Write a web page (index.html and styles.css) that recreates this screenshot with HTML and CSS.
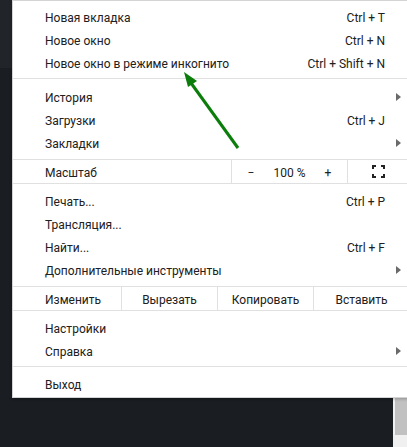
FILE: index.html
```html
<!DOCTYPE html>
<html lang="ru">
<head>
    <meta charset="UTF-8">
    <title>Меню</title>
    <link rel="stylesheet" href="styles.css">
</head>
<body>
    <div class="backdrop">
        <div class="topbar"></div>
        <div class="scrollbar"><div class="thumb"></div></div>
    </div>

    <div class="menu">
        <div class="group first">
            <div class="item"><span>Новая вкладка</span><span class="key">Ctrl + T</span></div>
            <div class="item"><span>Новое окно</span><span class="key">Ctrl + N</span></div>
            <div class="item"><span>Новое окно в режиме инкогнито</span><span class="key">Ctrl + Shift + N</span></div>
        </div>
        <div class="group second">
            <div class="item sub"><span>История</span></div>
            <div class="item"><span>Загрузки</span><span class="key">Ctrl + J</span></div>
            <div class="item sub"><span>Закладки</span></div>
        </div>
        <div class="zoom_row">
            <div class="zoom_label">Масштаб</div>
            <div class="zoom_controls">
                <span class="zbtn">&minus;</span>
                <span class="zval">100 %</span>
                <span class="zbtn">+</span>
            </div>
            <div class="fullscreen">
                <svg width="13" height="13" viewBox="0 0 13 13">
                    <!-- four corners of the fullscreen icon -->
                    <path d="M1 4V1H4M9 1H12V4M12 9V12H9M4 12H1V9" fill="none" stroke="#222" stroke-width="2"/>
                </svg>
            </div>
        </div>
        <div class="group">
            <div class="item"><span>Печать...</span><span class="key">Ctrl + P</span></div>
            <div class="item"><span>Трансляция...</span></div>
            <div class="item"><span>Найти...</span><span class="key">Ctrl + F</span></div>
            <div class="item sub"><span>Дополнительные инструменты</span></div>
        </div>
        <div class="edit_row">
            <div class="edit_label">Изменить</div>
            <div class="edit_btn">Вырезать</div>
            <div class="edit_btn">Копировать</div>
            <div class="edit_btn">Вставить</div>
        </div>
        <div class="group fourth">
            <div class="item"><span>Настройки</span></div>
            <div class="item sub"><span>Справка</span></div>
        </div>
        <div class="group last">
            <div class="item"><span>Выход</span></div>
        </div>

        <!-- green pointer drawn over the menu -->
        <svg class="pointer" width="70" height="90" viewBox="0 0 70 90">
            <line x1="63" y1="82" x2="16" y2="17" stroke="#0b7d0b" stroke-width="3"/>
            <polygon points="9,6 22,15 13,21" fill="#0b7d0b"/>
        </svg>
    </div>
</body>
</html>
```

FILE: styles.css
```css
html, body{
    margin: 0;
    height: 100%;
    overflow: hidden;
}

body{
    background: #1a1d21;
    font-family: Roboto, "Noto Sans", sans-serif;
    font-size: 12px;
    color: #202020;
}

.backdrop{
    position: relative;
    height: 100%;
}

.topbar{
    height: 68px;
    background: #212428;
}

.scrollbar{
    position: absolute;
    right: 0;
    top: 0;
    bottom: 0;
    width: 14px;
    background: #f0f0f0;
}

.thumb{
    margin-top: 360px;
    margin-left: 2px;
    height: 75px;
    background: #c1c1c1;
}

/* dropdown menu lies over the page */
.menu{
    position: absolute;
    left: 12px;
    top: 0;
    width: 398px;
    box-sizing: border-box;
    background: #fff;
    border: 1px solid #d4d4d4;
    box-shadow: 0 1px 3px rgba(0,0,0,0.25);
}

.group{
    padding: 5px 0;
    border-bottom: 1px solid #e0e0e0;
}

.group.first{
    padding: 4px 0;
}

.group.second{
    padding: 6px 0 5px;
}

.group.fourth{
    padding: 5px 0 4px;
}

.group.last{
    border-bottom: none;
    padding: 5px 0 2px;
}

/* text sits a bit lower than the middle of the row */
.item{
    display: flex;
    justify-content: space-between;
    height: 23px;
    line-height: 26px;
    padding: 0 24px 0 32px;
    position: relative;
}

.item.sub::after{
    content: "";
    position: absolute;
    right: 8px;
    top: 8px;
    border-left: 5px solid #6a6a6a;
    border-top: 4px solid transparent;
    border-bottom: 4px solid transparent;
}

.zoom_row, .edit_row{
    display: flex;
    height: 23px;
    line-height: 26px;
    border-bottom: 1px solid #e0e0e0;
}

.zoom_label{
    flex: 1;
    padding-left: 32px;
}

.zoom_controls{
    width: 115px;
    display: flex;
    border-left: 1px solid #e0e0e0;
}

.zbtn{
    width: 38px;
    text-align: center;
}

.zval{
    flex: 1;
    text-align: center;
}

.fullscreen{
    width: 61px;
    border-left: 1px solid #e0e0e0;
    display: flex;
    align-items: center;
    justify-content: center;
}

.edit_label{
    width: 76px;
    padding-left: 32px;
}

.edit_btn{
    width: 95px;
    text-align: center;
    border-left: 1px solid #e0e0e0;
}

.pointer{
    position: absolute;
    left: 162px;
    top: 65px;
}
```
